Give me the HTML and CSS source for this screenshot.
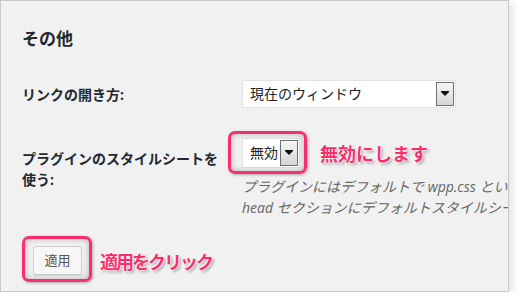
FILE: index.html
```html
<!DOCTYPE html>
<html lang="ja">
<head>
  <meta charset="UTF-8" />
  <title>その他</title>
  <link rel="stylesheet" href="styles.css">
</head>
<body>
  <div class="panel">
    <h2>その他</h2>

    <!-- リンクの開き方 -->
    <div class="row row-link">
      <div class="label">リンクの開き方:</div>
      <div class="select select-wide">
        <span class="select-text">現在のウィンドウ</span>
        <span class="select-arrow"></span>
      </div>
    </div>

    <!-- スタイルシート -->
    <div class="row row-style">
      <div class="label label-wrap">プラグインのスタイルシートを使う:</div>
      <div class="field">
        <div class="field-top">
          <div class="select select-small">
            <span class="select-text">無効</span>
            <span class="select-arrow"></span>
            <span class="mark mark-select"></span>
          </div>
          <span class="callout">無効にします</span>
        </div>
        <p class="desc">プラグインにはデフォルトで wpp.css とい<br>head セクションにデフォルトスタイルシー</p>
      </div>
    </div>

    <div class="row row-submit">
      <div class="btn-wrap">
        <span class="btn">適用</span>
        <span class="mark mark-btn"></span>
      </div>
      <span class="callout callout-tight">適用をクリック</span>
    </div>
  </div>
</body>
</html>
```

FILE: styles.css
```css
body {
  margin: 0;
  background: #fff;
  font-family: "Open Sans", "Noto Sans CJK JP", sans-serif;
  color: #23282d;
}
.panel {
  box-sizing: border-box;
  width: 509px;
  height: 292px;
  border: 1px solid #c8c8c8;
  background: #f1f1f1;
  box-shadow: 3px 3px 8px rgba(0,0,0,0.12);
  padding-left: 21px;
  overflow: hidden;
}
h2 {
  margin: 0;
  padding-top: 27px;
  font-size: 17px;
  line-height: 22px;
  font-weight: bold;
}
.row {
  display: flex;
}
.row-link {
  margin-top: 30px;
  align-items: center;
}
.row-style {
  margin-top: 30px;
}
.label {
  width: 220px;
  flex-shrink: 0;
  font-size: 14px;
  font-weight: bold;
  line-height: 21px;
}
.label-wrap {
  box-sizing: border-box;
  padding-top: 10px;
  padding-right: 18px;
}
.select {
  position: relative;
  box-sizing: border-box;
  display: flex;
  align-items: center;
  background: #fff;
  border: 1px solid #e2e2e2;
  font-size: 14px;
  color: #222;
}
.select-wide {
  width: 214px;
  height: 28px;
}
.select-small {
  width: 58px;
  height: 30px;
}
.select-text {
  flex: 1;
  padding-left: 7px;
  line-height: 20px;
}
.select-arrow {
  position: relative;
  align-self: stretch;
  width: 16px;
  margin: 1px 1px 1px 0;
  border: 1px solid #707070;
  background: linear-gradient(#f6f6f6, #d6d6d6);
}
.select-arrow::after {
  content: "";
  position: absolute;
  left: 4px;
  top: 50%;
  margin-top: -2px;
  border-top: 4px solid #111;
  border-left: 4px solid transparent;
  border-right: 4px solid transparent;
}
.select-arrow::before {
  content: "";
  position: absolute;
  left: 4px;
  top: 50%;
  margin-top: -3px;
  width: 8px;
  height: 1px;
  background: #111;
}
.field-top {
  display: flex;
  align-items: center;
}
.desc {
  margin: 8px 0 0;
  font-size: 14px;
  line-height: 21px;
  font-style: italic;
  color: #666;
  white-space: nowrap;
}
.row-submit {
  margin-top: 28px;
  padding-left: 11px;
  align-items: center;
}
.btn-wrap {
  position: relative;
}
.btn {
  display: block;
  box-sizing: border-box;
  width: 49px;
  height: 29px;
  line-height: 27px;
  text-align: center;
  font-size: 13px;
  color: #555;
  background: #f7f7f7;
  border: 1px solid #cfcfcf;
  border-radius: 3px;
  box-shadow: 0 1px 0 #ddd;
}
.mark {
  position: absolute;
  border: 3px solid #f7306c;
  border-radius: 7px;
  box-shadow: inset 0 0 6px rgba(0,0,0,0.25), 1px 1px 3px rgba(0,0,0,0.3);
  pointer-events: none;
}
.mark-select {
  top: -8px;
  left: -15px;
  right: -8px;
  bottom: -7px;
}
.mark-btn {
  top: -10px;
  left: -11px;
  right: -10px;
  bottom: -7px;
}
.callout {
  margin-left: 20px;
  font-family: "Noto Sans CJK JP", sans-serif;
  font-size: 18px;
  font-weight: bold;
  line-height: 22px;
  color: #f7306c;
  text-shadow: 0 0 2px #fff, 0 0 2px #fff, 0 0 2px #fff, 2px 2px 3px rgba(0,0,0,0.35);
}
.callout-tight {
  margin-left: 18px;
  letter-spacing: -2px;
}
```
